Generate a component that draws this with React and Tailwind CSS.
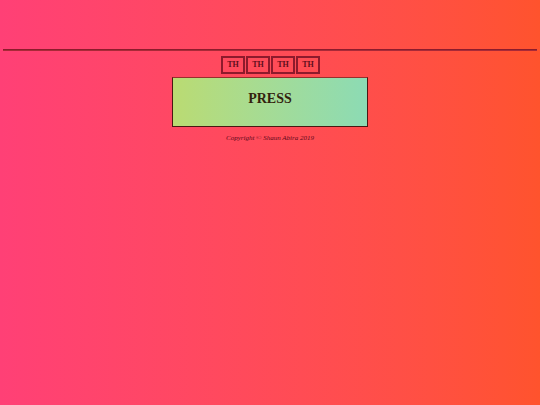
import React from 'react';

const cells = ['TH', 'TH', 'TH', 'TH'];

export default function App() {
  return (
    <div
      className="w-full h-[405px] bg-linear-to-r from-[#ff4076] to-[#ff532d] pt-[49px]"
      style={{ fontFamily: '"Liberation Serif", "Times New Roman", serif' }}
    >
      {/* divider */}
      <div className="mx-[3px] h-[2px] bg-[#8c1c2c] border-b border-[#a82a38]" />

      {/* header cells */}
      <div className="flex justify-center gap-[1px] mt-[5px] ml-[1px]">
        {cells.map((c, i) => (
          <div
            key={i}
            className="w-[24px] h-[18px] flex items-center justify-center border-2 border-[#8e1a2c] text-[8px] font-bold text-[#5e0e1c]"
          >
            {c}
          </div>
        ))}
      </div>

      {/* press button */}
      <div className="flex justify-center mt-[3px]">
        <button className="w-[196px] h-[50px] flex items-center justify-center pb-[8px] bg-linear-to-r from-[#badb72] to-[#8cdbb4] border border-[#4a1812] border-t-[#96302c] text-[14px] font-bold text-[#33220e]">
          PRESS
        </button>
      </div>

      <p className="text-center italic text-[7px] text-[#5c081a] mt-[6px]">
        Copyright © Shaun Abira 2019
      </p>
    </div>
  );
}
